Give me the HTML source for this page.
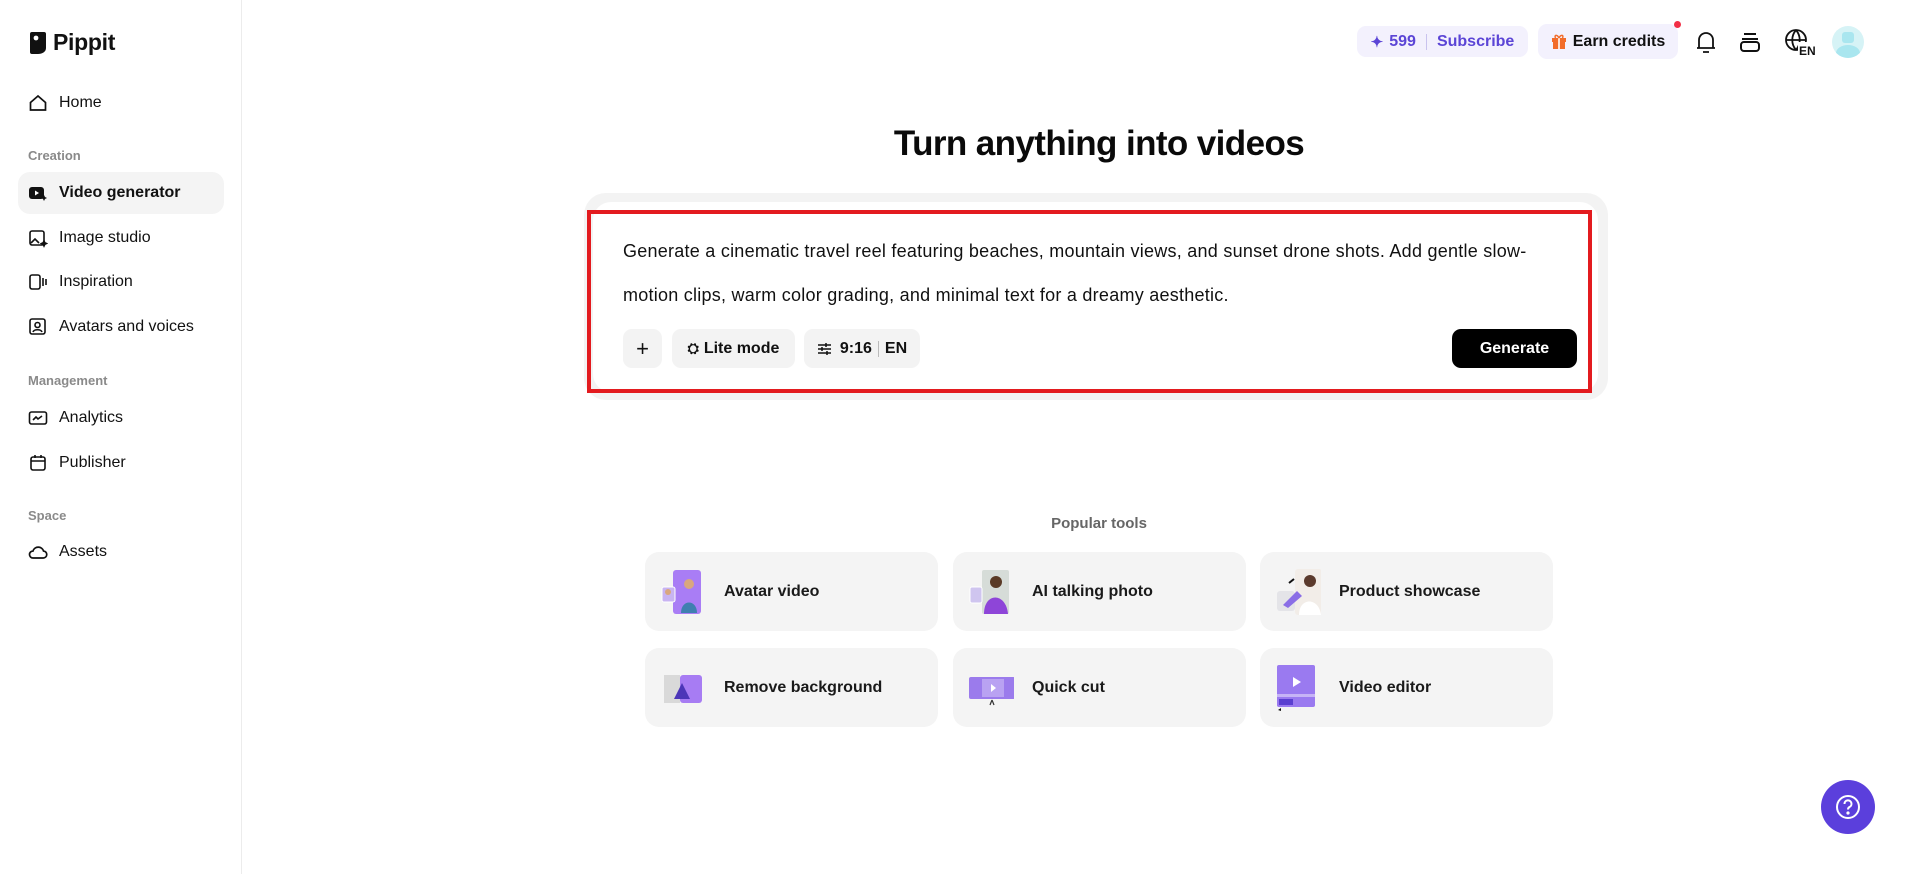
<!DOCTYPE html>
<html><head><meta charset="utf-8"><style>
*{margin:0;padding:0;box-sizing:border-box}
body{width:1915px;height:874px;background:#fff;font-family:"Liberation Sans",Arial,sans-serif;color:#111;position:relative;overflow:hidden}
.abs{position:absolute}
.side{left:0;top:0;width:242px;height:874px;border-right:1px solid #ececec}
.nav{position:absolute;left:28px;display:flex;align-items:center;font-size:16px;color:#111;height:20px}
.nav svg{width:20px;height:20px;margin-right:11px}
.sec{position:absolute;left:28px;font-size:13px;color:#8a8a8a;font-weight:bold}
.pill{position:absolute;background:#f3f3f3;border-radius:9px;display:flex;align-items:center;justify-content:center;font-size:16px;font-weight:bold;color:#111}
.card{position:absolute;width:293px;height:79px;background:#f4f4f4;border-radius:14px;display:flex;align-items:center;font-size:16px;font-weight:bold;color:#1a1a1a}
.card .ic{position:absolute;left:15px;top:17px;width:46px;height:46px}
.card span{position:absolute;left:79px}
</style></head><body>
<div class="abs side"></div>
<div class="abs" style="left:29px;top:29px;display:flex;align-items:center">
<svg width="18" height="24" viewBox="0 0 18 24"><path d="M3 1h12a2 2 0 0 1 2 2v14c0 4-4 6-8 6H3a2 2 0 0 1-2-2V3a2 2 0 0 1 2-2z" fill="#111"/><circle cx="7" cy="7" r="2.4" fill="#fff"/></svg>
<span style="font-size:23px;font-weight:bold;margin-left:6px;letter-spacing:-0.3px">Pippit</span></div>

<div class="nav" style="top:93px"><svg viewBox="0 0 20 20" fill="none" stroke="#111" stroke-width="1.7"><path d="M2.5 9.5L10 3l7.5 6.5V17h-15z"/></svg>Home</div>
<div class="sec" style="top:148px">Creation</div>
<div class="abs" style="left:18px;top:172px;width:206px;height:42px;background:#f4f4f4;border-radius:12px"></div>
<div class="nav" style="top:183px;font-weight:bold"><svg viewBox="0 0 20 20"><rect x="1" y="4" width="15" height="12" rx="3" fill="#111"/><path d="M7 7.5v5l4-2.5z" fill="#fff"/><path d="M16 12l1 2 2 1-2 1-1 2-1-2-2-1 2-1z" fill="#111"/></svg>Video generator</div>
<div class="nav" style="top:228px"><svg viewBox="0 0 20 20" fill="none" stroke="#111" stroke-width="1.6"><rect x="2" y="3" width="14" height="14" rx="2"/><path d="M3 15l4-4 4 4"/><path d="M16 13l.8 1.7 1.7.8-1.7.8-.8 1.7-.8-1.7-1.7-.8 1.7-.8z" fill="#111"/></svg>Image studio</div>
<div class="nav" style="top:272px"><svg viewBox="0 0 20 20" fill="none" stroke="#111" stroke-width="1.6"><rect x="2" y="3" width="10" height="14" rx="2"/><path d="M15 6v8M18 7v6"/></svg>Inspiration</div>
<div class="nav" style="top:317px"><svg viewBox="0 0 20 20" fill="none" stroke="#111" stroke-width="1.6"><rect x="2" y="2" width="15" height="15" rx="2"/><circle cx="9.5" cy="8" r="2.5"/><path d="M5 15c1-3 8-3 9 0"/></svg>Avatars and voices</div>
<div class="sec" style="top:373px">Management</div>
<div class="nav" style="top:408px"><svg viewBox="0 0 20 20" fill="none" stroke="#111" stroke-width="1.6"><rect x="1.5" y="4" width="17" height="12" rx="2"/><path d="M5 12l3-3 2 2 4-3"/></svg>Analytics</div>
<div class="nav" style="top:453px"><svg viewBox="0 0 20 20" fill="none" stroke="#111" stroke-width="1.6"><rect x="3" y="4" width="14" height="13" rx="2"/><path d="M3 8h14M7 2v3M13 2v3"/></svg>Publisher</div>
<div class="sec" style="top:508px">Space</div>
<div class="nav" style="top:542px"><svg viewBox="0 0 20 20" fill="none" stroke="#111" stroke-width="1.7"><path d="M5 16h10a3.5 3.5 0 0 0 .5-7A5.5 5.5 0 0 0 5 9a3.5 3.5 0 0 0 0 7z"/></svg>Assets</div>

<div class="pill" style="left:1357px;top:26px;width:171px;height:31px;background:#f3f1fd;color:#5b45d6;font-size:16px">
<span style="font-size:15px;margin-right:6px">✦</span>599<span style="width:1px;height:16px;background:#c9c3ee;margin:0 10px"></span>Subscribe</div>
<div class="pill" style="left:1538px;top:24px;width:140px;height:35px;background:#f3f1fd">
<svg width="16" height="17" viewBox="0 0 16 17" style="margin-right:6px"><rect x="1" y="5" width="14" height="4" fill="#f26c2a"/><rect x="2" y="9" width="12" height="7" fill="#f26c2a"/><rect x="7.2" y="5" width="1.6" height="11" fill="#fff"/><path d="M8 5C6 1 3 2 4.5 5M8 5c2-4 5-3 3.5 0" stroke="#f26c2a" stroke-width="1.5" fill="none"/></svg>Earn credits</div>
<div class="abs" style="left:1674px;top:21px;width:7px;height:7px;border-radius:50%;background:#f22f46"></div>
<svg class="abs" style="left:1694px;top:29px" width="24" height="26" viewBox="0 0 24 26" fill="none" stroke="#111" stroke-width="1.8"><path d="M5 19V11a7 7 0 0 1 14 0v8M3 19h18M9 23h6"/></svg>
<svg class="abs" style="left:1739px;top:31px" width="22" height="22" viewBox="0 0 22 22" fill="none" stroke="#111" stroke-width="2"><path d="M5 3h12M3 8h16"/><rect x="2" y="11" width="18" height="9" rx="3"/></svg>
<svg class="abs" style="left:1784px;top:28px" width="34" height="28" viewBox="0 0 34 28"><g fill="none" stroke="#111" stroke-width="1.8"><circle cx="12" cy="12" r="10"/><path d="M2 12h20M12 2c-5 6-5 14 0 20M12 2c5 6 5 14 0 20"/></g><rect x="14" y="14" width="20" height="14" fill="#fff"/><text x="15" y="27" font-family="Liberation Sans" font-weight="bold" font-size="12" fill="#111">EN</text></svg>
<div class="abs" style="left:1832px;top:26px;width:32px;height:32px;border-radius:50%;background:#d6f3f6;overflow:hidden"><div class="abs" style="left:10px;top:6px;width:12px;height:11px;background:#a9e6ef;border-radius:3px"></div><div class="abs" style="left:4px;top:19px;width:24px;height:16px;background:#a9e6ef;border-radius:50%"></div></div>

<div class="abs" style="left:0;width:2198px;top:124px;text-align:center;font-size:35px;font-weight:bold;letter-spacing:-0.6px;color:#0a0a0a">Turn anything into videos</div>

<div class="abs" style="left:584px;top:193px;width:1024px;height:207px;background:#f3f3f3;border-radius:22px"></div>
<div class="abs" style="left:593px;top:202px;width:1005px;height:190px;background:#fff;border-radius:18px"></div>
<div class="abs" style="left:587px;top:210px;width:1005px;height:183px;border:4px solid #e31b1f"></div>
<div class="abs" style="left:623px;top:229px;width:960px;font-size:18px;letter-spacing:0.25px;line-height:44px;color:#111;white-space:nowrap">Generate a cinematic travel reel featuring beaches, mountain views, and sunset drone shots. Add gentle slow-<br>motion clips, warm color grading, and minimal text for a dreamy aesthetic.</div>
<div class="pill" style="left:623px;top:329px;width:39px;height:39px;font-weight:normal;font-size:22px">+</div>
<div class="pill" style="left:672px;top:329px;width:123px;height:39px"><span style="font-size:14px;margin-right:5px">⛭</span>Lite mode</div>
<div class="pill" style="left:804px;top:329px;width:116px;height:39px"><svg width="15" height="14" viewBox="0 0 15 14" style="margin-right:8px" stroke="#111" stroke-width="1.5"><path d="M1 3h13M1 7h13M1 11h13"/><path d="M9 1v4M5 5v4M10 9v4"/></svg>9:16<span style="width:1px;height:16px;background:#bbb;margin:0 6px"></span>EN</div>
<div class="pill" style="left:1452px;top:329px;width:125px;height:39px;background:#000;color:#fff">Generate</div>

<div class="abs" style="left:0;width:2198px;top:515px;text-align:center;font-size:15px;font-weight:bold;color:#666">Popular tools</div>

<div class="card" style="left:645px;top:552px"><svg class="ic" viewBox="0 0 46 46"><rect x="13" y="1" width="28" height="44" rx="3" fill="#a97df5"/><circle cx="29" cy="15" r="5" fill="#d9a77e"/><path d="M21 44c0-14 16-14 16 0z" fill="#3f7fb0"/><rect x="2" y="18" width="13" height="15" rx="2" fill="#c8b4f2" stroke="#fff"/><circle cx="8" cy="23" r="3" fill="#d9a77e"/></svg><span>Avatar video</span></div>
<div class="card" style="left:953px;top:552px"><svg class="ic" viewBox="0 0 46 46"><rect x="14" y="1" width="27" height="44" rx="2" fill="#d6dcd8"/><circle cx="28" cy="13" r="6" fill="#5a3a26"/><path d="M16 45c0-22 22-22 24 0z" fill="#8e45d8"/><rect x="2" y="18" width="12" height="16" rx="2" fill="#cfc5ef" stroke="#fff"/></svg><span>AI talking photo</span></div>
<div class="card" style="left:1260px;top:552px"><svg class="ic" viewBox="0 0 46 46"><rect x="20" y="0" width="27" height="46" rx="3" fill="#f2ede8"/><circle cx="35" cy="12" r="6" fill="#5b3a2c"/><path d="M24 46c0-18 20-18 22 0z" fill="#fff"/><rect x="2" y="22" width="18" height="20" rx="3" fill="#e4e4e8"/><path d="M8 36l14-14 5 5-14 12z" fill="#8a6ee6"/><path d="M14 14l5-4" stroke="#111" stroke-width="2"/></svg><span>Product showcase</span></div>
<div class="card" style="left:645px;top:648px"><svg class="ic" viewBox="0 0 46 46"><rect x="4" y="10" width="16" height="28" fill="#d9d9d9"/><rect x="20" y="10" width="22" height="28" rx="3" fill="#a77cf3"/><path d="M14 34l8-16 8 16z" fill="#4c36b8"/></svg><span>Remove background</span></div>
<div class="card" style="left:953px;top:648px"><svg class="ic" viewBox="0 0 46 46"><rect x="1" y="12" width="46" height="22" rx="2" fill="#9b7bec"/><rect x="14" y="14" width="22" height="18" fill="#b9a2f2"/><path d="M23 19v8l5-4z" fill="#fff"/><path d="M24 35l-2 5M24 35l2 5" stroke="#333" stroke-width="1.2"/></svg><span>Quick cut</span></div>
<div class="card" style="left:1260px;top:648px"><svg class="ic" viewBox="0 0 46 46"><rect x="2" y="0" width="38" height="42" rx="2" fill="#9a7af0"/><path d="M18 12v10l8-5z" fill="#fff"/><rect x="2" y="29" width="38" height="3" fill="#c6b4f6"/><rect x="4" y="34" width="14" height="6" fill="#5a3fd0"/><path d="M6 43l-3 2 3 1z" fill="#111"/></svg><span>Video editor</span></div>

<div class="abs" style="left:1821px;top:780px;width:54px;height:54px;border-radius:50%;background:#5b3fdc;display:flex;align-items:center;justify-content:center"><svg width="26" height="26" viewBox="0 0 26 26" fill="none" stroke="#fff" stroke-width="2"><circle cx="13" cy="13" r="11"/><path d="M9.5 10a3.5 3.5 0 1 1 5 3c-1 .6-1.5 1.2-1.5 2.5"/><circle cx="13" cy="19" r=".6" fill="#fff"/></svg></div>
</body></html>
